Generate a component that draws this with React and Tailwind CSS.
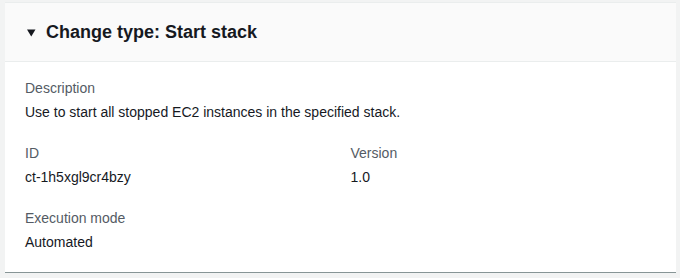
import React from "react";

const Field = ({ label, value }) => (
  <div>
    <div className="text-[14px] leading-[22px] mb-[2px] text-[#545b64]">{label}</div>
    <div className="text-[14px] leading-[22px] text-[#16191f]">{value}</div>
  </div>
);

const App = () => {
  return (
    <div
      className="w-[680px] h-[278px] bg-[#f2f3f3] pt-[2px] pl-[5px]"
      style={{ fontFamily: '"Liberation Sans", Arial, sans-serif' }}
    >
      <div className="w-[671px] h-[271px] bg-white border-t border-[#eaeded] border-b border-b-[#879596]">
        <div className="h-[59px] bg-[#fafafa] border-b border-[#eaeded] flex items-center pl-[22px]">
          <svg width="9" height="8" viewBox="0 0 9 8" className="mr-[10px] mt-[1px]">
            <polygon points="0,0.5 8.5,0.5 4.25,7.5" fill="#16191f" />
          </svg>
          <h2 className="text-[18px] font-bold leading-[26px] text-[#16191f]">
            Change type: Start stack
          </h2>
        </div>
        <div className="px-[20px] pt-[15px] flex flex-col gap-[19px]">
          <Field
            label="Description"
            value="Use to start all stopped EC2 instances in the specified stack."
          />
          <div className="grid grid-cols-2 gap-x-[20px]">
            <Field label="ID" value="ct-1h5xgl9cr4bzy" />
            <Field label="Version" value="1.0" />
          </div>
          <Field label="Execution mode" value="Automated" />
        </div>
      </div>
    </div>
  );
};

export default App;
